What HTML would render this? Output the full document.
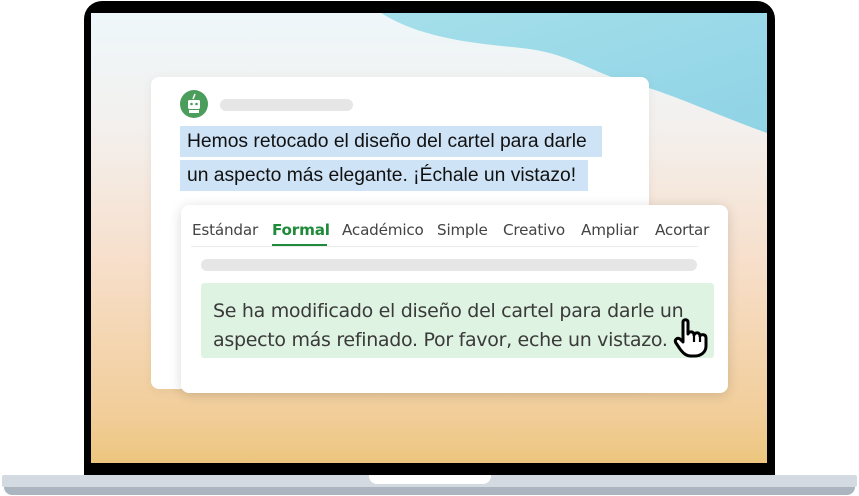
<!DOCTYPE html>
<html><head><meta charset="utf-8"><style>
*{margin:0;padding:0;box-sizing:border-box}
body{width:859px;height:496px;background:#fff;position:relative;overflow:hidden;font-family:"Liberation Sans",sans-serif}
.bezel{position:absolute;left:84px;top:1px;width:691px;height:474px;background:#000;border-radius:18px 18px 0 0}
.screen{position:absolute;left:91px;top:13px;width:676px;height:450px;overflow:hidden;
background:linear-gradient(180deg,#eef7fa 0%,#f3f0ee 25%,#f7dfcb 55%,#f1cd98 90%,#ecc67e 100%)}
.base1{position:absolute;left:2px;top:475px;width:855px;height:12px;background:#d4dae1;border-radius:2px}
.base2{position:absolute;left:4px;top:487px;width:851px;height:8px;background:#aab5bf;border-radius:0 0 14px 14px}
.notch{position:absolute;left:369px;top:475px;width:122px;height:9px;background:#fff;border-radius:0 0 8px 8px}
.card1{position:absolute;left:151px;top:77px;width:498px;height:312px;background:#fff;border-radius:8px;box-shadow:0 2px 10px rgba(0,0,0,.06)}
.av{position:absolute;left:180px;top:90px;width:28px;height:28px;border-radius:50%;background:#4a9d5b}
.bar{position:absolute;background:#e6e6e6;border-radius:6px}
.hl{position:absolute;left:180px;height:31px;background:#cfe3f6;color:#111;font-size:19.3px;line-height:31px;padding-left:7px;white-space:nowrap}
.card2{position:absolute;left:181px;top:205px;width:547px;height:188px;background:#fff;border-radius:8px;box-shadow:0 2px 12px rgba(0,0,0,.15)}
.tabs{position:absolute;top:221px;font-family:"DejaVu Sans",sans-serif;font-size:15.2px;color:#444}
.tabs span{position:absolute;white-space:nowrap;letter-spacing:-.2px}
.line{position:absolute;left:191px;top:246px;width:507px;height:1px;background:#ececec}
.green{position:absolute;left:201px;top:283px;width:513px;height:75px;background:#dff3e2;border-radius:3px;font-family:"DejaVu Sans",sans-serif;font-size:19px;color:#3a3a3a;line-height:29px;padding:14px 0 0 12px;letter-spacing:-.3px;white-space:nowrap}
</style></head><body>
<div class="bezel"></div>
<div class="screen">
<svg width="676" height="450" style="position:absolute;left:0;top:0">
<defs><linearGradient id="c" x1="0" y1="0" x2="1" y2="1"><stop offset="0" stop-color="#a5dfea"/><stop offset="1" stop-color="#8fd3e6"/></linearGradient></defs>
<path d="M290 0 C330 25 380 30 430 35 C480 40 500 60 540 70 C580 80 620 100 676 120 V0Z" fill="url(#c)"/>
</svg>
</div>
<div class="base1"></div><div class="base2"></div><div class="notch"></div>
<div class="card1"></div>
<div class="av"><svg width="28" height="28"><rect x="8" y="10" width="12" height="9" rx="1.5" fill="#fff"/><circle cx="11.5" cy="14" r="1.3" fill="#4a9d5b"/><circle cx="16.5" cy="14" r="1.3" fill="#4a9d5b"/><rect x="9" y="20" width="10" height="3" fill="#fff"/><path d="M15 4 L13 9" stroke="#fff" stroke-width="1.5"/></svg></div>
<div class="bar" style="left:220px;top:99px;width:133px;height:12px"></div>
<div class="hl" style="top:126px;width:422px">Hemos retocado el diseño del cartel para darle</div>
<div class="hl" style="top:160px;width:408px">un aspecto más elegante. ¡Échale un vistazo!</div>
<div class="card2"></div>
<div class="tabs">
<span style="left:192px">Estándar</span>
<span style="left:272px;color:#1f8a3a;font-weight:bold">Formal</span>
<span style="left:342px">Académico</span>
<span style="left:437px">Simple</span>
<span style="left:503px">Creativo</span>
<span style="left:581px">Ampliar</span>
<span style="left:655px">Acortar</span>
</div>
<div style="position:absolute;left:272px;top:244px;width:55px;height:2px;background:#1f8a3a"></div>
<div class="line"></div>
<div class="bar" style="left:201px;top:259px;width:496px;height:12px"></div>
<div class="green">Se ha modificado el diseño del cartel para darle un<br>aspecto más refinado. Por favor, eche un vistazo.</div>
<svg style="position:absolute;left:673px;top:318px" width="42" height="42" viewBox="0 0 42 42">
<path d="M10 4 C10 1 15 1 15 4 L15 16 C16 13 21 13 21 17 C22 14 27 14 27 18 C28 16 33 16 33 20 L33 28 C33 34 28 38 22 38 L18 38 C13 38 10 35 7 31 L3 25 C1 22 4 19 7 21 L10 24 Z" fill="#fff" stroke="#000" stroke-width="3" stroke-linejoin="round"/>
<path d="M21 17 V24 M27 18 V24" stroke="#000" stroke-width="2.2"/>
</svg>
</body></html>
